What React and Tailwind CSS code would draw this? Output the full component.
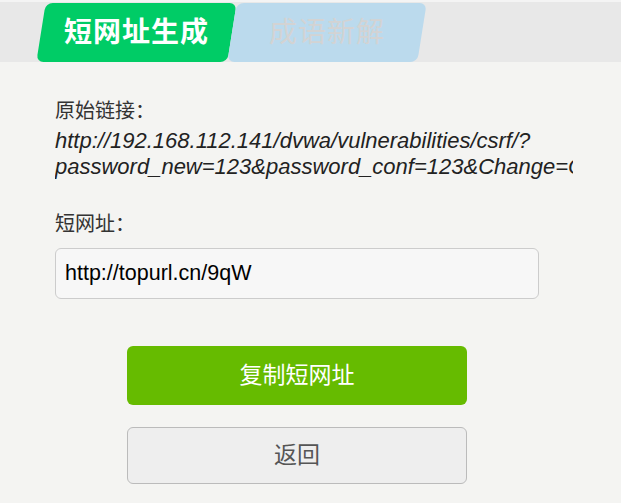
export default function App() {
  const cjk = { fontFamily: '"Liberation Sans", "Noto Sans CJK SC", sans-serif' };
  return (
    <div className="min-h-screen w-full bg-[#f4f4f2]" style={cjk}>
      <div className="h-[62px] bg-[#e8e8e8] border-t-2 border-[#f4f4f4] flex pl-[41px] pt-[1px]">
        <div className="w-[191px] h-[59px] -skew-x-9 rounded-[7px] bg-[#00cc66] flex items-center justify-center">
          <span className="skew-x-9 text-[28px] font-bold text-white leading-none tracking-[1px]">短网址生成</span>
        </div>
        <div className="w-[190px] h-[59px] -skew-x-9 rounded-[7px] bg-[#bbdaed] flex items-center justify-center">
          <span className="skew-x-9 text-[28px] text-[#d3d3d3] leading-none tracking-[1px]">成语新解</span>
        </div>
      </div>

      <div className="px-[55px] pt-[37px]">
        <div className="text-[20px] leading-[25px] text-[#333]">原始链接：</div>
        <div className="mt-[4px] w-[518px] overflow-hidden whitespace-nowrap italic text-[22px] leading-[26px] text-[#222]">
          <div>http://192.168.112.141/dvwa/vulnerabilities/csrf/?</div>
          <div>password_new=123&amp;password_conf=123&amp;Change=Change</div>
        </div>

        <div className="mt-[32px] text-[20px] leading-[25px] text-[#333]">短网址：</div>
        <div className="mt-[11px] w-[484px] h-[51px] rounded-[6px] border border-[#cccccc] bg-[#f7f7f7] flex items-center px-[9px] text-[21.5px] text-black">
          http://topurl.cn/9qW
        </div>

        <div className="mt-[47px] flex flex-col items-start pl-[72px] gap-[22px]">
          <div className="w-[340px] h-[59px] rounded-[6px] bg-[#66bb00] flex items-center justify-center text-[23px] text-white">
            复制短网址
          </div>
          <div className="w-[340px] h-[57px] rounded-[6px] border border-[#bbbbbb] bg-[#eeeeee] flex items-center justify-center text-[23px] text-[#555]">
            返回
          </div>
        </div>
      </div>
    </div>
  );
}
